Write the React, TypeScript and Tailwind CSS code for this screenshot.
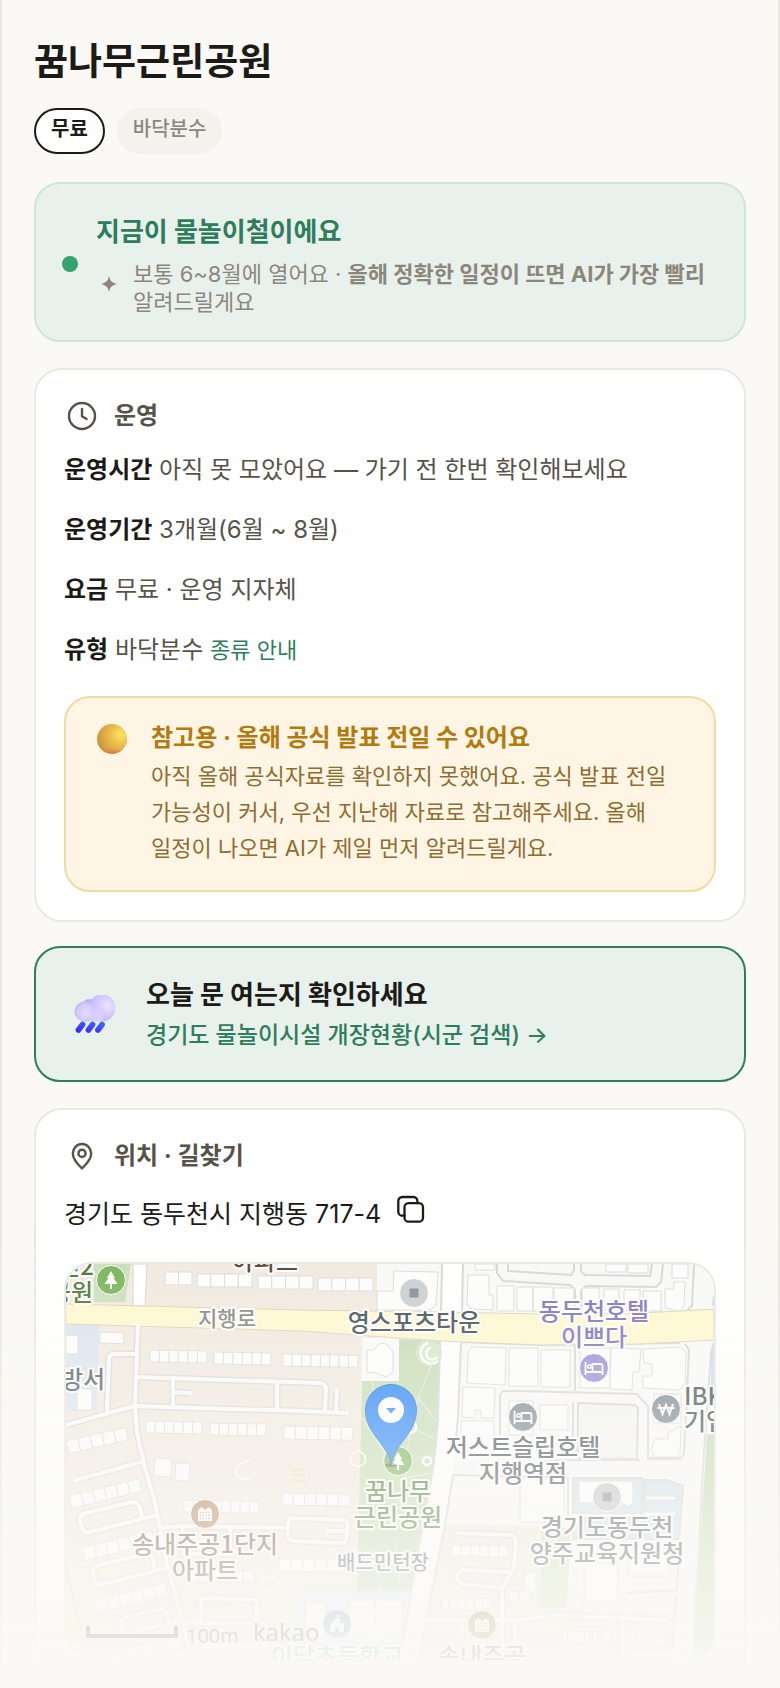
import type { ReactNode } from "react";

function ClockIcon() {
  return (
    <svg className="size-9 shrink-0" viewBox="0 0 36 36" fill="none" stroke="currentColor" strokeWidth="2.4" strokeLinecap="round" strokeLinejoin="round" aria-hidden="true">
      <circle cx="18" cy="18" r="13" />
      <path d="M18 11v7.2l4.6 2.8" />
    </svg>
  );
}

function PlaceIcon() {
  return (
    <svg className="size-9 shrink-0" viewBox="0 0 36 36" fill="none" stroke="currentColor" strokeWidth="2.4" strokeLinejoin="round" aria-hidden="true">
      <path d="M18 30.4C14.5 27.2 8.8 21.6 8.8 15.6a9.2 9.6 0 0 1 18.4 0c0 6-5.700 11.600-9.200 14.800z" />
      <circle cx="18" cy="15.400" r="3.600" />
    </svg>
  );
}

function CopyIcon() {
  return (
    <svg className="size-8" viewBox="0 0 32 32" fill="none" stroke="currentColor" strokeWidth="2.300" strokeLinejoin="round" strokeLinecap="round" aria-hidden="true">
      <rect x="9.500" y="9.200" width="18.500" height="18.500" rx="4" />
      <path d="M22.400 9.200V7a4 4 0 0 0-4-4H7.300a4 4 0 0 0-4 4v10.700a4 4 0 0 0 4 4h2.200" />
    </svg>
  );
}

function Sparkle() {
  return (
    <svg className="mt-4 size-4 shrink-0" viewBox="0 0 16 16" fill="currentColor" aria-hidden="true">
      <path d="M8 0c.9 4.600 2.500 6.700 8 8-5.500 1.300-7.100 3.400-8 8-.9-4.600-2.500-6.700-8-8 5.500-1.300 7.100-3.400 8-8z" />
    </svg>
  );
}

function YellowBall() {
  return (
    <svg className="size-[30px] shrink-0" viewBox="0 0 30 30" aria-hidden="true">
      <defs>
        <radialGradient id="ball" cx="0.780" cy="0.360" r="0.800">
          <stop offset="0" stopColor="#ffe65f" />
          <stop offset="0.450" stopColor="#eabb49" />
          <stop offset="1" stopColor="#c9953f" />
        </radialGradient>
        <linearGradient id="ballShade" x1="0" y1="0" x2="0" y2="1">
          <stop offset="0.820" stopColor="#d6705f" stopOpacity="0" />
          <stop offset="1" stopColor="#d6705f" stopOpacity="0.800" />
        </linearGradient>
      </defs>
      <circle cx="15" cy="15" r="15" fill="url(#ball)" />
      <circle cx="15" cy="15" r="15" fill="url(#ballShade)" />
    </svg>
  );
}

function RainCloud() {
  return (
    <svg className="h-10 w-[42px] shrink-0" viewBox="0 0 42 40" aria-hidden="true">
      <defs>
        <radialGradient id="puffL" cx="0.550" cy="0.550" r="0.550">
          <stop offset="0" stopColor="#e3dcff" />
          <stop offset="0.700" stopColor="#d5cbfb" />
          <stop offset="1" stopColor="#c3b9f2" />
        </radialGradient>
        <radialGradient id="puffR" cx="0.700" cy="0.400" r="0.650">
          <stop offset="0" stopColor="#e9e3ff" />
          <stop offset="0.550" stopColor="#d6cafd" />
          <stop offset="1" stopColor="#c5b6fa" />
        </radialGradient>
        <linearGradient id="drop" x1="0" y1="1" x2="1" y2="0">
          <stop offset="0" stopColor="#3a2cff" />
          <stop offset="1" stopColor="#3a63ff" />
        </linearGradient>
      </defs>
      <circle cx="15" cy="11" r="7" fill="#bdb3ee" />
      <circle cx="28" cy="13" r="13.500" fill="url(#puffR)" />
      <path d="M9 14h20v12.500H9z" fill="#d8cefd" />
      <circle cx="10.500" cy="16.500" r="10" fill="url(#puffL)" />
      <g stroke="url(#drop)" strokeWidth="5.600" strokeLinecap="round">
        <path d="M8.600 29.500 4.400 35M18.600 29.500 14.400 35M28.100 29.500 23.900 35" />
      </g>
    </svg>
  );
}

// A row of n house lots sharing their side walls
function Lots({ x, y, w, h = 13, n, rotate = 0 }: { x: number; y: number; w: number; h?: number; n: number; rotate?: number }) {
  return (
    <g transform={`rotate(${rotate} ${x} ${y})`} fill="#fdfdfc" stroke="#dddad5">
      {Array.from({ length: n }, (_, i) => (
        <rect key={i} x={x + (i * w) / n} y={y} width={w / n} height={h} />
      ))}
    </g>
  );
}

function Spot({ x, y, color, children }: { x: number; y: number; color: string; children?: ReactNode }) {
  return (
    <g transform={`translate(${x} ${y})`}>
      <circle r="14.500" fill={color} stroke="#fff" strokeWidth="1" />
      {children}
    </g>
  );
}

function Tree() {
  return <path d="M0-9 4-2H2.500L6.500 4H1v5h-2V4h-5.500l4-6H-4z" fill="#fff" />;
}

function Bed() {
  return (
    <g stroke="#fff" strokeWidth="1.800">
      <path d="M-8.500-6v13M-8.500 4H8.500M8.500 7V-2Q8.500-4 6.500-4H-1.500V3" fill="none" />
      <circle cx="-4.500" cy="-1.500" r="1.800" strokeWidth="1.400" fill="none" />
    </g>
  );
}

function Apartment() {
  return (
    <g>
      <path d="M-7 7V-4l3.500-3L0-4l3.500-3L7-4V7z" fill="#fff" />
      <path d="M-5-1.500H5M-5 1.500H5M-5 4.500H5" stroke="#b89469" strokeWidth="1.400" strokeDasharray="1.400 1.400" />
    </g>
  );
}

const roads = [
  "M138 1328 135 1408 137 1435 145 1470 155 1505 167 1565 180 1615 192 1662",
  "M137 1379 320 1385Q326 1386 326 1392L325 1412",
  "M66 1427 134 1408 300 1413 346 1415",
  "M173 1380V1408M173 1394 190 1395M277 1384V1412M337 1393 336 1414",
  "M137 1356H113Q109 1357 109 1361L107 1415",
  "M76 1482 141 1464",
  "M154 1518 90 1534Q84 1536 82 1530L80 1522Q79 1517 86 1515L132 1504Q138 1504 140 1510L142 1520",
  "M167 1570 103 1586Q97 1588 95 1582L93 1574Q92 1569 99 1567L145 1556Q151 1556 153 1562L155 1572",
  "M181 1622 130 1635Q124 1637 122 1631L121 1626Q120 1621 127 1619L160 1611Q166 1611 168 1617L169 1625",
  "M161 1530 180 1528 288 1530M183 1528V1556H230V1530",
  "M293 1520 344 1522Q348 1523 348 1527L346 1542Q345 1545 341 1545L293 1543Q288 1542 288 1538V1525Q289 1520 293 1520M328 1533H348",
  "M187 1625 256 1626 257 1602 205 1600Q201 1600 201 1604V1625",
  "M458 1535 512 1537Q516 1539 516 1545L514 1570 503 1590 462 1586Q455 1582 458 1576 460 1572 465 1572L510 1574",
  "M427 1622H520L552 1617 666 1622M502 1590V1650M462 1622V1637M515 1622V1650M623 1620V1655L672 1657",
];

const blocks = [
  "M394 1273 438 1274 436 1307 430 1312H377V1293H393z",
  "M468 1277H489V1297H493V1312L472 1311 467 1306z",
  "M497 1288h17v25h-17zM517 1289h16v24h-16zM533 1289h20v24h-20zM554 1290h20v22h-20zM582 1290h17v24h-17zM604 1291h15v21h-15zM624 1292h16v21h-16zM643 1293h18v20h-18z",
  "M665 1291H674V1284H685L684 1308 680 1313 665 1310z",
  "M475 1266h20v6h-20zM606 1266h20v8h-20zM628 1266h20v9h-20zM672 1266h16v14h-16z",
  "M472 1349 506 1350 505 1387 467 1385 468 1354zM509 1350h29v38h-29zM541 1352h29v37h-29zM580 1350h30v40h-30z",
  "M611 1350 641 1351 639 1374H633L632 1392 610 1391z",
  "M643 1351 680 1349 686 1354 685 1385 680 1392 643 1390V1378H652V1366L644 1365z",
  "M463 1389 495 1390 494 1420H481V1412H475V1420L462 1419zM461 1423h33v33h-33zM540 1407h28v25h-28zM509 1403h24v34h-24z",
  "M651 1452 655 1441H668V1435L681 1428 680 1455 676 1459H655z",
  "M654 1396h27v29h-27z",
  "M520 1482 564 1480V1524H520zM584 1565h34v42h-34zM628 1560h42v18h-42z",
];

const outlines = [
  "M497 1266V1275L503 1283 570 1287 575 1292V1315",
  "M508 1266V1273L571 1277 574 1272V1266M581 1266V1273L585 1277 650 1278 652 1266",
  "M581 1315V1293L586 1288 656 1289 661 1284 663 1266M694 1266 692 1308 685 1314",
  "M442 1266 441 1313M463 1266 462 1314M440 1343 438 1425 434 1465 411 1593 400 1662",
  "M461 1345 458 1420 455 1450M575 1346V1393M461 1344 540 1347 680 1345",
  "M520 1393 637 1396 648 1408V1461H680L684 1456 689 1352 685 1346",
  "M500 1437V1397L503 1393H520M573 1405V1440L578 1460",
  "M418 1662 427 1617 445 1527 453 1477 568 1480V1524M680 1541 677 1592 627 1595M676 1598 672 1655",
  "M714 1345 711 1355 703 1470 693 1662M66 1570 88 1662M714 1298 713 1308",
  "M540 1462H640M650 1460H680",
];

const labels = [
  { x: 65, y: 1277, size: 24, fill: "#427027", text: ["근린2"] },
  { x: 71, y: 1303, size: 24, fill: "#427027", text: ["공원"] },
  { x: 265, y: 1272, size: 24, fill: "#54382a", text: ["아파트"] },
  { x: 227, y: 1328, size: 21, fill: "#7b7b7b", text: ["지행로"] },
  { x: 72, y: 1390, size: 24, fill: "#4a545d", text: ["소방서"] },
  { x: 414, y: 1333, size: 24, fill: "#34414a", text: ["영스포츠타운"] },
  { x: 594, y: 1322, size: 24, fill: "#7469b8", text: ["동두천호텔", "이쁘다"] },
  { x: 523, y: 1458, size: 24, fill: "#34414a", text: ["저스트슬립호텔", "지행역점"] },
  { x: 607, y: 1538, size: 24, fill: "#34414a", text: ["경기도동두천", "양주교육지원청"] },
  { x: 398, y: 1502, size: 24, fill: "#3a6a1e", text: ["꿈나무", "근린공원"] },
  { x: 205, y: 1555, size: 24, fill: "#54382a", text: ["송내주공1단지", "아파트"] },
  { x: 383, y: 1572, size: 20, fill: "#4a545d", text: ["배드민턴장"] },
  { x: 337, y: 1667, size: 24, fill: "#5b8fc4", text: ["이담초등학교"] },
  { x: 482, y: 1667, size: 24, fill: "#54382a", text: ["송내주공"] },
];

function ParkMap() {
  return (
    <svg className="block w-full" viewBox="66 1266 648 396" fontFamily="'Noto Sans CJK KR', sans-serif" fontWeight="500" role="img" aria-label="꿈나무근린공원 지도">
      <path d="M66 1266h648v396H66z" fill="#f9f9f8" />
      {/* districts */}
      <path d="M66 1266H377V1340H362L360 1470 357 1593 297 1662H66z" fill="#f1e9de" />
      <path d="M66 1570 88 1662H66z" fill="#eef0c0" />
      <path d="M94 1266H131L125 1304H94z" fill="#c8deb8" />
      <path d="M133 1266H147L145 1308H133z" fill="#fff" stroke="#d5d2cc" />
      <path d="M66 1327H99L97 1413H66z" fill="#d9e4ee" />
      <path d="M442 1266H463L461 1344 453 1477 418 1662H400L438 1425z" fill="#fff" />
      <path d="M445 1525 540 1528V1610L675 1614 672 1662H420L427 1617z" fill="#f1e9de" />
      <path d="M541 1530H570L567 1610H540z" fill="#cfe0ba" />
      <path d="M707 1436H714V1662H693z" fill="#c2dbb2" />
      <path d="M711 1350H714V1390H711z" fill="#c9dcea" />
      <path d="M399 1341 440 1343 438 1425 434 1465 411 1593H357L362 1383H399z" fill="#c2dbb2" />
      <path d="M297 1593H410L400 1662H297z" fill="#dde8f2" />
      <path d="M573 1480H642V1515H573zM644 1482H667L683 1488 679 1541H645zM573 1520H642V1541H573z" fill="#cfe1ec" stroke="#d3d3d3" strokeWidth="2" />
      <path d="M645 1498H676V1502H645zM645 1514H676V1518H645z" fill="#fff" stroke="#d3d3d3" />
      <path d="M579 1483H633V1504L629 1509 622 1505H579z" fill="#fff" stroke="#d3d3d3" />
      <path d="M578 1405 635 1407 638 1410 637 1461 578 1460z" fill="#f4f4f3" stroke="#d5d5d5" strokeWidth="2" />

      <g fill="none" stroke="#d6d5d1" strokeWidth="2">
        {outlines.map((d) => <path key={d} d={d} />)}
      </g>
      <g fill="#fdfdfd" stroke="#d9d9d7">
        {blocks.map((d) => <path key={d} d={d} />)}
      </g>

      {/* park paths */}
      <g fill="none" stroke="#fff" strokeWidth="1.500" opacity="0.400">
        <path d="M431 1368 418 1400 436 1422M418 1400 410 1429 434 1440M372 1383 380 1450M362 1420 395 1470M410 1429 405 1480 430 1475M362 1520H420M375 1550 380 1593M395 1540 400 1590" />
      </g>
      <circle cx="429" cy="1355" r="13" fill="#d3e5c7" />
      <g fill="none" stroke="#fff" strokeWidth="2.500">
        <path d="M428 1345A10.500 10.500 0 1 0 438 1363M431 1349.500A6 6 0 1 0 437 1359" />
        <circle cx="358" cy="1461" r="7.500" strokeWidth="1.500" />
        <circle cx="410" cy="1429" r="6" />
        <circle cx="427" cy="1463" r="4" />
        <path d="M250 1462C240 1464 234 1470 236 1476 240 1482 244 1481 250 1481" strokeWidth="1.500" />
        <circle cx="270" cy="1586" r="8" strokeWidth="1.500" />
      </g>
      <path d="M362 1340 399 1341V1383H362z" fill="#fafafa" />
      <path d="M367 1352 374 1352 378 1347Q386 1342 389 1350L393 1353V1374L386 1379 377 1375 367 1374z" fill="#fff" stroke="#d5d5d3" />

      <path d="M66 1306 300 1312 441 1314 540 1316 620 1316 680 1313 714 1311V1342L640 1346 540 1347 441 1343 300 1333 66 1326z" fill="#fef8cc" stroke="#d8d0bf" />

      <g fill="none" stroke="#dad9d6" strokeWidth="7" strokeLinejoin="round">
        {roads.map((d) => <path key={d} d={d} />)}
      </g>
      <g fill="none" stroke="#fbfbfa" strokeWidth="4" strokeLinejoin="round" strokeLinecap="square">
        {roads.map((d) => <path key={d} d={d} />)}
      </g>

      <Lots x={165} y={1274} w={27} n={2} />
      <Lots x={197} y={1276} w={55} n={4} />
      <Lots x={258} y={1278} w={55} n={4} />
      <Lots x={318} y={1280} w={55} n={4} />
      <Lots x={150} y={1352} w={57} h={12} n={6} rotate={1} />
      <Lots x={214} y={1354} w={57} h={12} n={6} rotate={1} />
      <Lots x={283} y={1356} w={75} h={12} n={8} rotate={1} />
      <Lots x={146} y={1423} w={56} h={12} n={6} rotate={1} />
      <Lots x={210} y={1425} w={56} h={12} n={6} rotate={1} />
      <Lots x={284} y={1428} w={69} n={6} rotate={1} />
      <Lots x={100} y={1334} w={24} h={11} n={1} rotate={2} />
      <Lots x={66} y={1337} w={12} h={19} n={1} />
      <Lots x={77} y={1391} w={15} h={21} n={1} />
      <Lots x={66} y={1443} w={61} n={5} rotate={-13} />
      <Lots x={69} y={1498} w={72} n={6} rotate={-14} />
      <Lots x={82} y={1550} w={72} n={6} rotate={-14} />
      <Lots x={95} y={1602} w={72} n={6} rotate={-14} />
      <Lots x={110} y={1655} w={72} n={6} rotate={-14} />
      <Lots x={155} y={1460} w={17} h={18} n={1} rotate={4} />
      <Lots x={176} y={1465} w={14} h={17} n={1} rotate={4} />
      <Lots x={184} y={1502} w={75} h={12} n={8} rotate={1} />
      <Lots x={282} y={1495} w={68} h={12} n={6} rotate={1} />
      <Lots x={279} y={1561} w={72} h={12} n={6} rotate={1} />
      <Lots x={188} y={1573} w={66} h={11} n={6} />
      <Lots x={200} y={1643} w={80} h={11} n={8} />
      <Lots x={452} y={1547} w={56} h={11} n={6} rotate={1} />
      <Lots x={441} y={1600} w={50} h={11} n={6} rotate={1} />
      <Lots x={559} y={1633} w={51} h={12} n={6} rotate={1} />
      <Lots x={627} y={1635} w={37} h={11} n={4} rotate={1} />
      <Lots x={305} y={1605} w={20} h={40} n={1} />
      <Lots x={350} y={1602} w={52} h={42} n={2} />
      <Lots x={525} y={1574} w={11} h={20} n={1} />
      <Lots x={509} y={1594} w={21} h={9} n={2} />
      <path d="M291 1472h14M292 1477h13M290 1483h15" stroke="#efdfaa" strokeWidth="2.500" />

      <Spot x={111} y={1282} color="#74af52"><Tree /></Spot>
      <Spot x={398} y={1463} color="#6fae4c"><Tree /></Spot>
      <Spot x={414} y={1295} color="#c9cbce"><path d="M-4.500-4.500h9v9h-9z" fill="#7b8a90" /></Spot>
      <Spot x={607} y={1499} color="#bdbfc1"><path d="M-4.500-4.500h9v9h-9z" fill="#74838a" /></Spot>
      <Spot x={594} y={1370} color="#9487d5"><Bed /></Spot>
      <Spot x={523} y={1419} color="#73828a"><Bed /></Spot>
      <Spot x={666} y={1411} color="#73828a">
        <path d="M-7-5-3.500 5 0-4 3.500 5 7-5M-8.500-1H8.500" fill="none" stroke="#fff" strokeWidth="2" />
      </Spot>
      <Spot x={205} y={1516} color="#a77846"><Apartment /></Spot>
      <Spot x={482} y={1627} color="#a77846"><Apartment /></Spot>
      <Spot x={337} y={1626} color="#6f9fcb">
        <path d="M-7 8V-1h3.500v-2.500L0-6.500V-10l4 2-3 1.500 2.500 3V-1H7v9H2V4h-4v4z" fill="#fff" />
      </Spot>

      <g stroke="#fff" strokeWidth="4" strokeLinejoin="round" paintOrder="stroke" textAnchor="middle">
        {labels.map((l) => (
          <text key={l.x + "-" + l.y} fontSize={l.size} fill={l.fill}>
            {l.text.map((line, i) => (
              <tspan key={line} x={l.x} y={l.y + i * 26}>{line}</tspan>
            ))}
          </text>
        ))}
        <text fontSize="24" fill="#34414a" textAnchor="start">
          <tspan x="684" y="1407">IBK</tspan>
          <tspan x="684" y="1432">기업</tspan>
        </text>
      </g>

      {/* current place */}
      <ellipse cx="391" cy="1467" rx="6" ry="1.800" fill="#000" opacity="0.400" />
      <path d="M391 1466C388 1446 365.500 1436 365.500 1412a25.500 25.500 0 0 1 51 0C416.500 1436 394 1446 391 1466z" fill="#187dfa" stroke="#1a63cc" />
      <circle cx="391" cy="1412" r="13" fill="#fff" />
      <path d="M386 1410h10l-5 5.500z" fill="#187dfa" />

      <path d="M88 1628V1638H176V1628" fill="none" stroke="#3d3d3d" strokeWidth="4" />
      <text x="186" y="1645" fontSize="20" fontWeight="400" fontFamily="'Open Sans', sans-serif" fill="#3d3d3d">100m</text>
      <text x="253" y="1643" fontSize="24" fontWeight="400" fontFamily="'Open Sans', sans-serif" fill="#3d3d3d">kakao</text>
    </svg>
  );
}

function Row({ label, children }: { label: string; children: ReactNode }) {
  return (
    <div>
      <dt className="inline font-bold text-[#1c1b18]">{label}</dt>{" "}
      <dd className="inline">{children}</dd>
    </div>
  );
}

export default function App() {
  return (
    <div className="relative h-screen overflow-hidden border-x-2 border-[#e9e8e1] bg-[#faf9f5] px-8 pt-9 font-['Inter','Noto_Sans_CJK_KR',sans-serif] text-[#1c1b18] break-keep">
      <h1 className="text-[37px] leading-[52px] font-bold">꿈나무근린공원</h1>

      <div className="mt-5 flex gap-3">
        <span className="rounded-full border-2 border-[#1c1b18] bg-white px-[15px] pt-1 pb-2 text-[20px] leading-[30px] font-bold">무료</span>
        <span className="rounded-full border-2 border-transparent bg-[#f3f2ed] px-[14px] pt-1 pb-2 text-[20px] leading-[30px] font-medium text-[#8c877b]">바닥분수</span>
      </div>

      <section className="mt-7 flex items-center gap-[18px] rounded-[26px] border-2 border-[#cfe5d9] bg-[#e8f1ec] px-[26px] pt-7 pb-6">
        <span className="size-4 shrink-0 rounded-full bg-[#35a26d]" />
        <div className="min-w-0">
          <h2 className="text-[26px] leading-10 font-bold text-[#2e7d5b]">지금이 물놀이철이에요</h2>
          <div className="mt-2 flex items-start gap-4 pl-[5px] text-[#8c877b]">
            <Sparkle />
            <p className="text-[22px] leading-7">
              보통 6~8월에 열어요 · <b className="font-bold">올해 정확한 일정이 뜨면 AI가 가장 빨리</b> 알려드릴게요
            </p>
          </div>
        </div>
      </section>

      <section className="mt-[26px] rounded-[28px] border-2 border-[#e9e8e1] bg-white p-7">
        <h2 className="flex items-center gap-[14px] text-[24px] leading-9 font-bold text-[#57534a]">
          <ClockIcon />
          운영
        </h2>
        <dl className="mt-4 flex flex-col gap-5 text-[24px] leading-10 text-[#57534a]">
          <Row label="운영시간">아직 못 모았어요 — 가기 전 한번 확인해보세요</Row>
          <Row label="운영기간">3개월(6월 ~ 8월)</Row>
          <Row label="요금">무료 · 운영 지자체</Row>
          <Row label="유형">
            바닥분수 <a href="#types" className="text-[22px] text-[#2e7d5b]">종류 안내</a>
          </Row>
        </dl>

        <div className="mt-[26px] flex gap-6 rounded-[26px] border-2 border-[#f0dba5] bg-[#fff5e5] px-[31px] pt-[22px] pb-6">
          <div className="pt-1">
            <YellowBall />
          </div>
          <div>
            <h3 className="text-[24px] leading-9 font-bold text-[#b37a0d]">참고용 · 올해 공식 발표 전일 수 있어요</h3>
            <p className="mt-[2px] text-[22px] leading-9 text-[#8f6c30]">
              아직 올해 공식자료를 확인하지 못했어요. 공식 발표 전일 가능성이 커서, 우선 지난해 자료로 참고해주세요. 올해 일정이 나오면 AI가 제일 먼저 알려드릴게요.
            </p>
          </div>
        </div>
      </section>

      <a href="#status" className="mt-6 flex items-center gap-[30px] rounded-[26px] border-2 border-[#2e7d5b] bg-[#e8f1ec] px-[38px] pt-[27px] pb-[25px]">
        <RainCloud />
        <span className="block">
          <strong className="block text-[26px] leading-10 font-bold">오늘 문 여는지 확인하세요</strong>
          <span className="block text-[23px] leading-10 font-medium text-[#2e7d5b]">경기도 물놀이시설 개장현황(시군 검색) →</span>
        </span>
      </a>

      <section className="mt-[26px] rounded-[28px] border-2 border-[#e9e8e1] bg-white p-7">
        <h2 className="flex items-center gap-[14px] text-[24px] leading-9 font-bold text-[#57534a]">
          <PlaceIcon />
          위치 · 길찾기
        </h2>
        <div className="mt-5 flex items-center gap-[14px] text-[25px] leading-10">
          <p>경기도 동두천시 지행동 717-4</p>
          <button type="button" aria-label="주소 복사" className="pb-2">
            <CopyIcon />
          </button>
        </div>
        <div className="mt-7 overflow-hidden rounded-[28px] border-2 border-[#e9e8e1]">
          <ParkMap />
        </div>
      </section>

      <div className="pointer-events-none fixed inset-x-0 bottom-0 h-[470px] bg-linear-to-b from-[#faf9f5]/0 to-[#faf9f5]" />
    </div>
  );
}
